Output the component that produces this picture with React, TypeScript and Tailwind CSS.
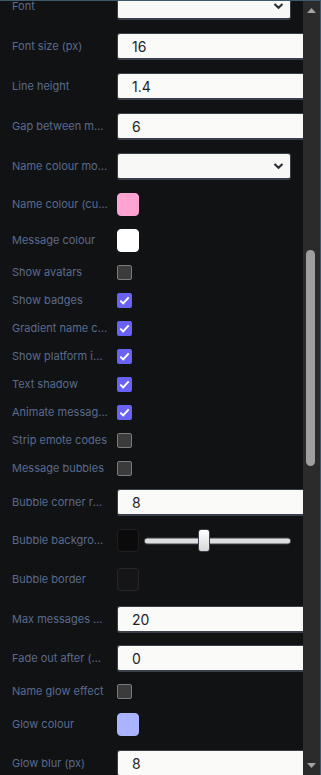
import React from 'react';

type Row = { label: string; mt?: number } & (
  | { kind: 'select' }
  | { kind: 'input'; value: string }
  | { kind: 'swatch'; color: string; border?: string }
  | { kind: 'check'; checked: boolean }
  | { kind: 'slider'; color: string; value: number }
);

const rows: Row[] = [
  { kind: 'select', label: 'Font' },
  { kind: 'input', label: 'Font size (px)', value: '16' },
  { kind: 'input', label: 'Line height', value: '1.4' },
  { kind: 'input', label: 'Gap between messages', value: '6' },
  { kind: 'select', label: 'Name colour mode' },
  { kind: 'swatch', label: 'Name colour (custom)', color: '#ffa3d2' },
  { kind: 'swatch', label: 'Message colour', color: '#ffffff' },
  { kind: 'check', label: 'Show avatars', checked: false },
  { kind: 'check', label: 'Show badges', checked: true },
  { kind: 'check', label: 'Gradient name colours', checked: true },
  { kind: 'check', label: 'Show platform icons', checked: true },
  { kind: 'check', label: 'Text shadow', checked: true },
  { kind: 'check', label: 'Animate messages', checked: true },
  { kind: 'check', label: 'Strip emote codes', checked: false },
  { kind: 'check', label: 'Message bubbles', checked: false },
  { kind: 'input', label: 'Bubble corner radius', value: '8' },
  { kind: 'slider', label: 'Bubble background', color: '#0b0b0c', value: 0.4 },
  { kind: 'swatch', label: 'Bubble border', color: '#151517', border: '#26272a', mt: 3 },
  { kind: 'input', label: 'Max messages shown', value: '20', mt: 2 },
  { kind: 'input', label: 'Fade out after (ms)', value: '0', mt: -1 },
  { kind: 'check', label: 'Name glow effect', checked: false, mt: -1 },
  { kind: 'swatch', label: 'Glow colour', color: '#aab3ff', mt: 1 },
  { kind: 'input', label: 'Glow blur (px)', value: '8', mt: 1 },
];

const Chevron = () => (
  <svg width="11" height="7" viewBox="0 0 11 7" className="absolute right-[6px] top-1/2 -translate-y-1/2">
    <path d="M1.5 1.5 L5.5 5.2 L9.5 1.5" fill="none" stroke="#2b2f36" strokeWidth="2.2" />
  </svg>
);

const Control: React.FC<{ row: Row }> = ({ row }) => {
  switch (row.kind) {
    case 'select':
      return (
        <div className="relative h-[27px] w-[174px] rounded-[3px] border border-[#3a404a] border-b-2 bg-[#f8f8f7]">
          <Chevron />
        </div>
      );
    case 'input':
      return (
        <div className="flex h-[27px] w-[200px] shrink-0 items-center rounded-[3px] border border-[#3a404a] border-b-2 bg-[#fafaf9] pl-[14px] text-[14px] text-[#1f2329]">
          {row.value}
        </div>
      );
    case 'swatch':
      return (
        <div
          className="h-[23px] w-[22px] rounded-[4px] border"
          style={{ backgroundColor: row.color, borderColor: row.border ?? row.color }}
        />
      );
    case 'check':
      return row.checked ? (
        <div className="flex h-[15px] w-[15px] items-center justify-center rounded-[2px] bg-[#6a62f4]">
          <svg width="11" height="9" viewBox="0 0 11 9">
            <path d="M1.3 4.6 L4.2 7.4 L9.7 1.4" fill="none" stroke="#fff" strokeWidth="2" />
          </svg>
        </div>
      ) : (
        <div className="h-[15px] w-[15px] rounded-[2px] border border-[#7a7a7a] bg-[#3b3b3b]" />
      );
    case 'slider':
      return (
        <div className="flex items-center gap-[5px]">
          <div
            className="h-[23px] w-[22px] rounded-[4px] border border-[#1f2023]"
            style={{ backgroundColor: row.color }}
          />
          <div className="relative h-[23px] w-[147px]">
            <div className="absolute left-0 right-0 top-1/2 h-[7px] -translate-y-1/2 rounded-[3px] border border-[#3a404a] bg-[#dedede]" />
            <div
              className="absolute top-0 h-[23px] w-[12px] rounded-[3px] border border-[#3a404a] bg-gradient-to-b from-[#ffffff] to-[#d8d8d8]"
              style={{ left: `${row.value * 135}px` }}
            />
          </div>
        </div>
      );
  }
};

const rowHeight = (r: Row) => {
  if (r.kind === 'check') return 'h-[15px]';
  if (r.kind === 'swatch' || r.kind === 'slider') return 'h-[23px]';
  return 'h-[27px]';
};

export default function App() {
  return (
    <div
      className="flex h-[775px] w-[321px] overflow-hidden border-t border-r border-[#3e5a6c] bg-[#111214]"
      style={{ fontFamily: 'Inter, "Noto Sans", sans-serif' }}
    >
      <div className="w-[303px] overflow-hidden">
        <div className="-mt-[8px] flex flex-col gap-[13px] pl-[12px]">
          {rows.map((r, i) => (
            <div
              key={i}
              className={`flex items-center ${rowHeight(r)}`}
              style={r.mt ? { marginTop: r.mt } : undefined}
            >
              <div className="w-[105px] shrink-0 pr-[9px]">
                <div className="truncate text-[11px] leading-[15px] text-[#5a6b8d]">{r.label}</div>
              </div>
              <Control row={r} />
            </div>
          ))}
        </div>
      </div>
      <div className="relative w-[17px] shrink-0 bg-[#2b2b2b]">
        <svg width="9" height="5" viewBox="0 0 9 5" className="absolute left-[4px] top-[7px]">
          <path d="M0 5 L4.5 0 L9 5 Z" fill="#a3a3a3" />
        </svg>
        <div className="absolute left-[3px] top-[249px] h-[216px] w-[9px] rounded-full bg-[#9f9f9f]" />
        <svg width="9" height="5" viewBox="0 0 9 5" className="absolute bottom-[7px] left-[4px]">
          <path d="M0 0 L9 0 L4.5 5 Z" fill="#a3a3a3" />
        </svg>
      </div>
    </div>
  );
}
